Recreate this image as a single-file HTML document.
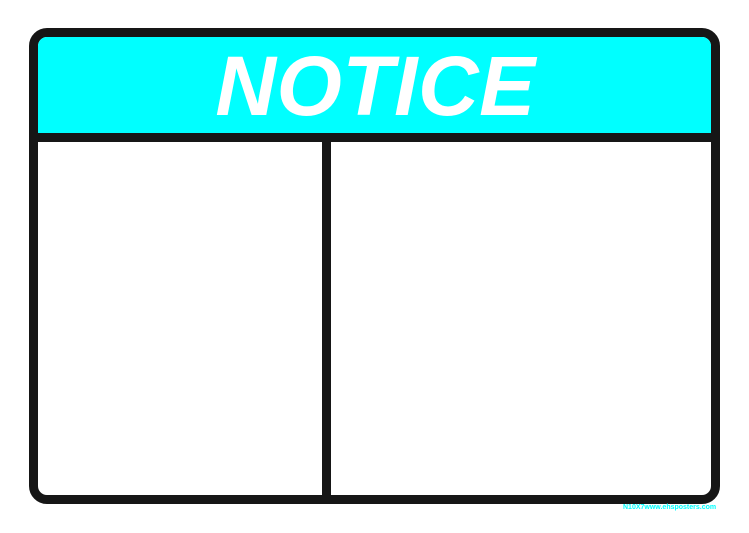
<!DOCTYPE html>
<html><head><style>
body{margin:0;width:749px;height:533px;background:#fff;position:relative;overflow:hidden;font-family:"Liberation Sans",sans-serif}
.box{position:absolute;left:29px;top:28px;width:691px;height:476px;box-sizing:border-box;border:9px solid #161616;border-radius:18px;overflow:hidden;background:#fff}
.hdr{position:absolute;left:0;top:0;right:0;height:96px;background:#00ffff;border-bottom:9px solid #161616}
.hdr span{position:absolute;left:2px;right:0;top:1px;text-align:center;color:#fff;font-weight:bold;font-style:italic;font-size:84px;line-height:96px;letter-spacing:0.5px}
.div{position:absolute;left:284px;top:105px;width:9px;bottom:0;background:#161616}
.foot{position:absolute;left:623px;top:504px;font-size:7px;font-weight:bold;color:#00ffff}
</style></head><body>
<div class="box"><div class="hdr"><span>NOTICE</span></div><div class="div"></div></div>
<div class="foot">N10X7www.ehsposters.com</div>
</body></html>
